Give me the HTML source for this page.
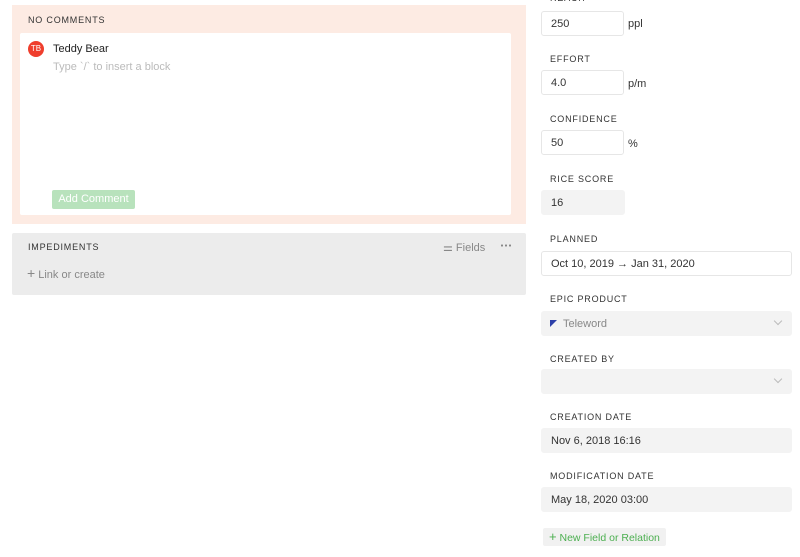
<!DOCTYPE html>
<html><head><style>
*{margin:0;padding:0;box-sizing:border-box}
body{width:800px;height:557px;background:#fff;font-family:"Liberation Sans",sans-serif;position:relative;overflow:hidden;color:#333}
.a{position:absolute}
.lbl{position:absolute;font-size:9px;letter-spacing:0.8px;color:#333;left:550px}
.in{position:absolute;left:541px;height:25px;border:1px solid #e6e6e6;border-radius:3px;font-size:11px;padding-left:9px;line-height:24px;color:#333}
.g{background:#f3f3f3;border-color:#f3f3f3}
.unit{position:absolute;left:628px;font-size:11px;color:#333}
.chev{position:absolute;right:10px;top:6px;width:6px;height:6px;border-right:1px solid #bbb;border-bottom:1px solid #bbb;transform:rotate(45deg)}
</style></head><body>
<div class="a" style="left:12px;top:5px;width:514px;height:219px;background:#fdebe3"></div>
<div class="a" style="left:28px;top:15px;font-size:9px;letter-spacing:0.8px">NO COMMENTS</div>
<div class="a" style="left:20px;top:33px;width:491px;height:182px;background:#fff;border-radius:2px"></div>
<div class="a" style="left:28px;top:41px;width:16px;height:16px;border-radius:50%;background:#ef3e2d;color:#fff;font-size:8px;line-height:16px;text-align:center">TB</div>
<div class="a" style="left:53px;top:43px;font-size:11px;color:#222">Teddy Bear</div>
<div class="a" style="left:53px;top:61px;font-size:11px;color:#bbb">Type `/` to insert a block</div>
<div class="a" style="left:52px;top:190px;width:83px;height:19px;background:#b8e2bc;border-radius:2px;color:#fff;font-size:11px;line-height:19px;text-align:center">Add Comment</div>

<div class="a" style="left:12px;top:233px;width:514px;height:62px;background:#ececec;border-radius:2px"></div>
<div class="a" style="left:28px;top:242px;font-size:9px;letter-spacing:0.8px">IMPEDIMENTS</div>
<div class="a" style="left:443px;top:241px;font-size:11px;color:#888">⚌ Fields</div>
<div class="a" style="left:500px;top:244px;width:12px;height:3px;background:radial-gradient(circle,#888 1px,transparent 1.2px) 0 0/4px 3px"></div>
<div class="a" style="left:27px;top:268px;font-size:11px;color:#888"><span style="font-size:14px;line-height:11px">+</span> Link or create</div>

<div class="lbl" style="top:-7px">REACH</div>
<div class="in" style="top:11px;width:83px">250</div><div class="unit" style="top:18px">ppl</div>
<div class="lbl" style="top:54px">EFFORT</div>
<div class="in" style="top:70px;width:83px">4.0</div><div class="unit" style="top:78px">p/m</div>
<div class="lbl" style="top:114px">CONFIDENCE</div>
<div class="in" style="top:130px;width:83px">50</div><div class="unit" style="top:138px">%</div>
<div class="lbl" style="top:174px">RICE SCORE</div>
<div class="in g" style="top:190px;width:84px">16</div>
<div class="lbl" style="top:234px">PLANNED</div>
<div class="in" style="top:251px;width:251px">Oct 10, 2019 → Jan 31, 2020</div>
<div class="lbl" style="top:294px">EPIC PRODUCT</div>
<div class="in g" style="top:311px;width:251px;color:#888;padding-left:21px">Teleword<div class="chev"></div><svg class="a" style="left:8px;top:8px" width="7" height="7"><polygon points="0,0 7,0 0,7" fill="#2c3fa8"/></svg></div>
<div class="lbl" style="top:354px">CREATED BY</div>
<div class="in g" style="top:369px;width:251px"><div class="chev"></div></div>
<div class="lbl" style="top:412px">CREATION DATE</div>
<div class="in g" style="top:428px;width:251px">Nov 6, 2018 16:16</div>
<div class="lbl" style="top:471px">MODIFICATION DATE</div>
<div class="in g" style="top:487px;width:251px">May 18, 2020 03:00</div>
<div class="a" style="left:543px;top:528px;width:123px;height:18px;background:#f1f1f1;border-radius:2px;color:#4caf50;font-size:10.5px;line-height:18px;padding-left:6px"><span style="font-size:13px">+</span> New Field or Relation</div>
</body></html>
